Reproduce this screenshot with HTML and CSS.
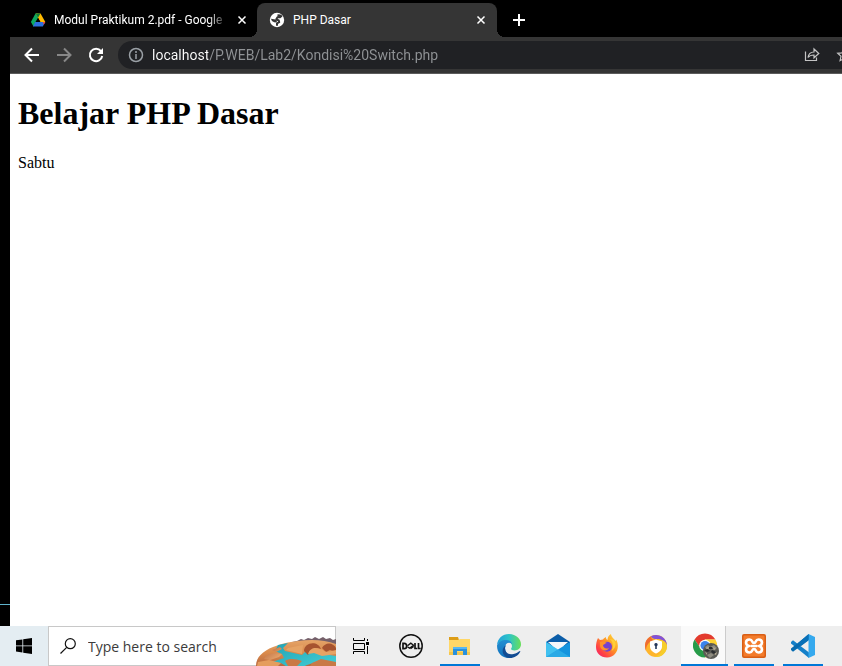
FILE: index.html
```html
<!DOCTYPE html>
<html lang="en">
<head>
<meta charset="utf-8">
<title>PHP Dasar</title>
<link rel="stylesheet" href="styles.css">
</head>
<body>
<div class="desktop">
  <div class="edge"></div>
  <div class="browser">
    <div class="tabs">
      <div class="tab">
        <svg class="favicon" viewBox="0 0 16 16"><path fill="#0da960" d="M5.500 1.500h2.700L9 5 3.500 14.500.9 10.100z"/><path fill="#ffba00" d="M5.700 1.500h4.800L15.300 10H10.200z"/><path fill="#0b7d38" d="M5.600 1.500h4.800L8 5.700z"/><path fill="#2d6fdd" d="M5.200 10h10.100l-2.500 4.500H2.900z"/><path fill="#f44336" d="M12.800 10h2.500l-1.500 2.700z"/><path fill="#000" d="M8 5.700l2.500 4.300h-5z"/></svg>
        <span class="title fade">Modul Praktikum 2.pdf - Google</span>
        <button class="close" aria-label="Close Modul Praktikum"><svg viewBox="0 0 10 10"><path d="M1.500 1.500l7 7m0-7l-7 7"/></svg></button>
      </div>
      <div class="tab active">
        <svg class="favicon" viewBox="0 0 16 16"><circle cx="8" cy="8" r="7.200" fill="#fff"/><path fill="none" stroke="#353535" stroke-width="2" stroke-linejoin="round" d="M12.800 3.800l-1.800 1.400H8.500L7.300 7.300 9.800 8.500l.4 1.700L8 11.300v2.400"/><path fill="#353535" d="M2 6.800l4.500.6L8 8.800l-.5 1.700-2.300-.3C4 10 2.500 9 2 6.800zM8.500 2.300l3 .2 1.800 1.800-1.500.8-3.300-.3z"/></svg>
        <span class="title">PHP Dasar</span>
        <button class="close" aria-label="Close PHP Dasar"><svg viewBox="0 0 10 10"><path d="M1.500 1.500l7 7m0-7l-7 7"/></svg></button>
      </div>
      <button class="newtab" aria-label="New tab"><svg viewBox="0 0 12 12"><path d="M6 0v12M0 6h12"/></svg></button>
    </div>
    <div class="toolbar">
      <button class="nav" aria-label="Back"><svg viewBox="0 0 16 16"><path d="M15 8H2M8 1.500L1.500 8 8 14.500"/></svg></button>
      <button class="nav dim" aria-label="Forward"><svg viewBox="0 0 16 16"><path d="M1 8h13M8 1.500L14.500 8 8 14.500"/></svg></button>
      <button class="nav" aria-label="Reload"><svg viewBox="0 0 16 16"><path d="M13 4.200A6.200 6.200 0 1 0 14.200 9"/><path class="solid" d="M15 1v6H9z"/></svg></button>
      <div class="omnibox">
        <svg class="info" viewBox="0 0 16 16"><circle cx="8" cy="8" r="6.500"/><path d="M8 7v5M8 4v2"/></svg>
        <input class="address" type="text" aria-label="Address" value="localhost/P.WEB/Lab2/Kondisi%20Switch.php">
        <button class="share" aria-label="Share"><svg viewBox="0 0 16 16"><path d="M1.500 4.500v9h11v-3M4 10.500C4.500 7 7 5 10 5V2l4.800 4.500L10 10.800V8C7.500 8 5.500 8.500 4 10.500z"/></svg></button>
        <button class="star" aria-label="Bookmark"><svg viewBox="0 0 16 16"><path d="M8 1.800l1.900 4 4.400.5L11 9.300l.9 4.400L8 11.500l-3.900 2.200.9-4.400-3.300-3 4.400-.5z"/></svg></button>
      </div>
    </div>
    <main class="page">
      <h1>Belajar PHP Dasar</h1>
      <p>Sabtu</p>
    </main>
  </div>
</div>
<div class="taskbar">
  <button class="start" aria-label="Start"><svg viewBox="0 0 16 16"><path d="M0 2.300l6.400-.9v6.100H0zM7.200 1.300L16 0v7.500H7.200zM0 8.300h6.400v6.200L0 13.600zM7.200 8.300H16V16l-8.800-1.300z"/></svg></button>
  <label class="search">
    <svg class="lens" viewBox="0 0 16 16"><circle cx="10.300" cy="5.700" r="5"/><path d="M6.700 9.300L.5 15.500"/></svg>
    <input type="text" placeholder="Type here to search" aria-label="Type here to search">
    <svg class="art" viewBox="0 0 80 30">
      <defs>
        <linearGradient id="sand" x1="0" y1="0" x2="0" y2="1"><stop offset="0" stop-color="#e5a468"/><stop offset=".5" stop-color="#d98a4c"/><stop offset="1" stop-color="#b9683f"/></linearGradient>
        <linearGradient id="pool" x1="0" y1="0" x2="1" y2="1"><stop offset="0" stop-color="#23a3b4"/><stop offset="1" stop-color="#42d0d8"/></linearGradient>
        <linearGradient id="dune" x1="0" y1="0" x2="1" y2="1"><stop offset="0" stop-color="#b5643b"/><stop offset="1" stop-color="#efb176"/></linearGradient>
      </defs>
      <path fill="#75606a" d="M36 6l5-1 4-2 3 1 4-2 4 1 3-2 4 2 4-2 3 2 4-1 3 2 3-1v7H36z"/>
      <path fill="url(#sand)" d="M0 30C0 21 7 15 17 11 25 8 32 6 42 5c14-2 27-1 38 3v22z"/>
      <path fill="url(#pool)" d="M22 9l10-2-5 5 2 3 17 4 4-4 8 1 9 2 13 2v10H66l-6-4-9 3-7 3H33l-8-5-9-1 12-4-2-4-7-3z"/>
      <path fill="url(#dune)" d="M8 23c2-5 10-7 18-5l-3 3-9 3zM16 14l8-3 2 2-6 3z"/>
      <path fill="#a6532f" d="M48 15c0-9 14-11 17-2-6-2-10 0-13 6zM66 12c3-6 11-6 14 0v4l-6-2-4 2z"/>
      <path fill="#e6a365" d="M32 12l15-3-1 9-16-4zM52 18c2-6 7-7 12-5 3 0 4 3 7 3l9-2v4l-14 2-8-3z"/>
      <path fill="#c97946" d="M29 25c4-3 11-2 17 0l-5 5h-9zM56 27l9-4 15 3v4H54z"/>
      <path fill="#e59d5e" d="M2 26l11-2 12 3-3 3H1z"/>
    </svg>
  </label>
  <div class="apps">
    <button class="app" aria-label="Task View"><svg class="i16" viewBox="0 0 16 16" fill="none" stroke="#000"><path d="M.5 0v2.500h11V0M.5 5.500h11v6H.5zM.5 16v-2.500h11V16M14.500 1v2M14.500 8v8"/><path fill="#000" stroke="none" d="M13 4h3v3h-3z"/></svg></button>
    <button class="app" aria-label="Dell"><svg class="i24" viewBox="0 0 24 24"><circle cx="12" cy="12" r="11.200" fill="none" stroke="#111" stroke-width="1.500"/><g fill="none" stroke="#111" stroke-width="1.700"><path d="M4 9.300v5.400h1.200c3.300 0 3.300-5.400 0-5.400zM16 9v5.500h2.200M19.500 9v5.500h2.200"/><path d="M8.500 11.800l3.300-2.600 2.700 2.100-4 3-2-1.500M11.500 14.700l3.200-2.300" stroke-width="1.300"/></g></svg></button>
    <button class="app open" aria-label="File Explorer"><svg class="i24" viewBox="0 0 24 24"><path fill="#dd9d17" d="M1 3h9l1 3v4H1z"/><path fill="#ffd767" d="M1 6h9l2-1h10v16H1z"/><path fill="#f6c64d" d="M1 18h21v3H1z"/><path fill="#2b91dc" d="M5 13h14v8h-4v-4H9v4H5z"/><path fill="#56b7f2" d="M5 13h14v2H5z"/></svg></button>
    <button class="app" aria-label="Edge"><svg class="i24" viewBox="0 0 24 24"><defs><linearGradient id="eg" x1="0" x2="1"><stop offset="0" stop-color="#229fdb"/><stop offset=".5" stop-color="#2dc4c8"/><stop offset="1" stop-color="#69df58"/></linearGradient><linearGradient id="eb" x1="0" y1="0" x2="0" y2="1"><stop offset="0" stop-color="#238fd2"/><stop offset="1" stop-color="#1070bc"/></linearGradient></defs><path fill="url(#eg)" d="M0 11C.5 4.500 5.500 0 12 0c7.200 0 12 5.200 12 10.200 0 3.900-3 6.200-6.300 6.200-2.800 0-4-1-3.500-1.900 2.300-4-.9-7-5-7C5 7.500 1.500 9 0 11z"/><path fill="url(#eb)" d="M0 11.500C1.500 8 5 6 9 6c3 0 5.500 1.500 6 4-3-2.600-7-.6-7 3.700 0 5 4 8.300 7 9.800C7 25.500 0 20.500 0 11.500z"/><path fill="#124b92" d="M9.200 11c-3.200 4 .3 11 7.300 9 2.600-.5 5-2.200 6-2.800.6-.3 1 .2.600.7-2 3.500-5.600 6-10.200 6-6.700 0-10.500-8.500-3.700-12.900z"/></svg></button>
    <button class="app" aria-label="Mail"><svg class="i24" viewBox="0 0 24 24"><path fill="#0b5da8" d="M0 8L12 0l12 8v4H0z"/><path fill="#f4f7fa" d="M2 8h20l-10 9z"/><path fill="#33b5ea" d="M0 8l12 8-12 7z"/><path fill="#1594de" d="M24 8L0 23h24z"/><path fill="#41c1f0" d="M0 8l12 7.500L0 23z"/><path fill="#2aaae6" d="M12 15.500L24 23H0z"/></svg></button>
    <button class="app" aria-label="Firefox"><svg class="i24" viewBox="0 0 24 24"><defs><linearGradient id="ff" x1="1" y1="0" x2="0" y2="1"><stop offset="0" stop-color="#ffe743"/><stop offset=".4" stop-color="#ff9b23"/><stop offset=".75" stop-color="#ff4045"/><stop offset="1" stop-color="#ee1879"/></linearGradient></defs><path fill="url(#ff)" d="M3 4l2 2 3-.5c1-1.500 2-2 3-2.500-.2 1.500.5 2.500 1.500 3C12.500 3 14 1 16 0c0 3 3 4.500 4.500 7l.8-1.500C25.500 14 21 23.500 12 23.500 5.500 23.500 1 19 1 13c0-3 .7-6.500 2-9z"/><circle cx="12" cy="12.800" r="5" fill="#7542cf"/><path fill="#ff942b" d="M5 8c3-1 5-.5 7 1-2 .2-2.500 1.500-4 2 .2 3 3 4.500 6 3-1.500 3.500-8 3.500-9-2z"/><path fill="#ffcf38" d="M15 5c3 3 4 8 1.500 12 4-2.500 5.500-7 2.500-11z"/></svg></button>
    <button class="app" aria-label="Secure Browser"><svg class="i24" viewBox="0 0 24 24"><circle cx="12" cy="12" r="11" fill="#ffb52b"/><path fill="#8252d8" d="M7 2.200A11 11 0 0 1 23 12c-1-5-5-7-10-7-3 0-5-.5-6-2.800z"/><path fill="#ef6c32" d="M7 2.200C1 5 0 11 2 17c0-5 2-9 8-11-2-.5-3-2-3-3.800z"/><path fill="#f6cd2b" d="M23 12c0 7-6 12-13 10.800 5-1 8-4 8-10 0-3-2-6-4-7 5 0 8 2 9 6.200z"/><path fill="#fff" d="M12 5.500l6 2v5c0 3.500-2.500 5.500-6 7-3.500-1.500-6-3.500-6-7v-5z"/><path fill="#24385b" d="M12 9a1.700 1.700 0 0 1 .8 3.200V15h-1.600v-2.800A1.700 1.700 0 0 1 12 9z"/></svg></button>
    <button class="app open current" aria-label="Chrome"><svg class="i26" viewBox="0 0 26 26"><path fill="#e33b2e" d="M1.600 6.500A12 12 0 0 1 22.400 6.500H12L7 15z"/><path fill="#fdd231" d="M22.400 6.500A12 12 0 0 1 12 24.500l5-9-5-9z"/><path fill="#279b49" d="M1.600 6.500A12 12 0 0 0 12 24.500l4-8-9-2z"/><circle cx="12" cy="12.500" r="5.800" fill="#fff"/><circle cx="12" cy="12.500" r="4.500" fill="#3c83ed"/><circle cx="18" cy="18" r="8" fill="#5b5b55"/><path fill="#8e8c80" d="M12 14l3-2 2 2 4-2 3 3-3 2-4-1-2 2zM14 22l4-2 3 2-4 3z"/><path fill="#b4aa91" d="M13 15l2-1 1 1-2 1zM20 14l3 2-2 1zM12 19l2 1v2zM21 21l3-2-1 3z"/><path fill="#292c2e" d="M11 17l4-1 2 2-3 1zM19 17l4 2-2 2-3-2zM16 14h3l1 2h-4z"/></svg></button>
    <button class="app open" aria-label="XAMPP"><svg class="i24" viewBox="0 0 24 24"><rect width="24" height="24" rx="2" fill="#d95e15"/><rect x="1.500" y="1.500" width="21" height="21" rx="1" fill="#f37b2b"/><path fill="none" stroke="#fff" stroke-width="2.600" stroke-linejoin="round" stroke-linecap="round" d="M9.500 12h5M7 12C3 11 3 5.500 7.500 5.500c3.500 0 2 3.500 4.500 3.500s1-3.500 4.500-3.500C21 5.500 21 11 17 12c4 1 4 6.500-.5 6.500-3.500 0-2-3.500-4.500-3.500s-1 3.500-4.500 3.500C3 18.500 3 13 7 12z"/></svg></button>
    <button class="app open" aria-label="Visual Studio Code"><svg class="i24" viewBox="0 0 24 24"><path fill="#1480c9" d="M0 8l2-1.700 16 12.200V24L0 9.500z"/><path fill="#066bb0" d="M0 16l2 1.700L18 5.500V0L0 14.500z"/><path fill="#35a9ee" d="M17.500 0L24 3v18l-6.500 3z"/><path fill="#0870b7" d="M17.500 0v6.500L10 12l-3-2.700z"/></svg></button>
  </div>
</div>
</body>
</html>
```
FILE: styles.css
```css
* { box-sizing: border-box; }

body {
  margin: 0;
  height: 100vh;
  display: flex;
  flex-direction: column;
  overflow: hidden;
  background: #000;
  font-family: "Open Sans", "Noto Sans", sans-serif;
}

button {
  padding: 0;
  border: 0;
  background: none;
  display: flex;
  align-items: center;
  justify-content: center;
  flex: none;
}

input {
  min-width: 0;
  padding: 0;
  border: 0;
  outline: 0;
  background: none;
  font-family: inherit;
}

svg { display: block; flex: none; }

.desktop { flex: 1; min-height: 0; display: flex; }

.edge {
  width: 10px;
  flex: none;
  background: linear-gradient(#5fb3cc, #5fb3cc) 0 calc(100% - 21px) / 100% 1px no-repeat;
}

.browser { flex: 1; min-width: 0; display: flex; flex-direction: column; }

.tabs { display: flex; padding: 3px 0 0 8px; }

.tab {
  position: relative;
  width: 240px;
  height: 34px;
  padding: 0 10px 0 12px;
  display: flex;
  align-items: center;
  color: #fff;
  font-family: Roboto, sans-serif;
  font-size: 12px;
}

.tab.active { background: #353535; border-radius: 8px 8px 0 0; margin-left: -1px; }

.tab.active::before,
.tab.active::after {
  content: "";
  position: absolute;
  bottom: 0;
  width: 8px;
  height: 8px;
}

.tab.active::before { right: 100%; background: radial-gradient(circle at 0 0, transparent 8px, #353535 8px); }
.tab.active::after { left: 100%; background: radial-gradient(circle at 100% 0, transparent 8px, #353535 8px); }

.favicon { width: 16px; height: 16px; margin-right: 8px; }

.title { flex: 1; min-width: 0; white-space: nowrap; overflow: hidden; margin-right: 8px; }
.fade { -webkit-mask-image: linear-gradient(90deg, #000 calc(100% - 20px), transparent); mask-image: linear-gradient(90deg, #000 calc(100% - 20px), transparent); }

.close { width: 12px; height: 16px; }
.close svg { width: 10px; height: 10px; }
.close path, .newtab path { fill: none; stroke: #fff; stroke-width: 2; }
.close path { stroke-width: 1.5px; }

.newtab { width: 28px; margin-left: 8px; }
.newtab svg { width: 12px; height: 12px; }

.toolbar {
  height: 37px;
  display: flex;
  align-items: center;
  padding-left: 6px;
  background: #353535;
  border-bottom: 1px solid #5b5b5b;
}

.nav { width: 32px; height: 28px; }
.nav svg { width: 16px; height: 16px; }
.nav path { fill: none; stroke: #fff; stroke-width: 2; }
.nav .solid { fill: #fff; stroke: none; }
.nav.dim path { stroke: #888; }

.omnibox {
  flex: 1;
  min-width: 0;
  height: 28px;
  margin-left: 6px;
  padding-left: 10px;
  display: flex;
  align-items: center;
  background: #202124;
  border-radius: 14px 0 0 14px;
}

.info { width: 16px; height: 16px; margin-right: 8px; fill: none; stroke: #9aa0a6; stroke-width: 1.5px; }

.address {
  flex: 1;
  height: 24px;
  font-family: Roboto, sans-serif;
  font-size: 14px;
  color: transparent;
  background: linear-gradient(90deg, #fff 56px, #909396 56px);
  -webkit-background-clip: text;
  background-clip: text;
}

.share { width: 16px; margin-right: 16px; }
.share svg, .star svg { width: 16px; height: 16px; fill: none; stroke: #c4c4c4; stroke-width: 1.2px; }
.star { width: 6px; justify-content: flex-start; overflow: hidden; }

.page {
  flex: 1;
  padding: 0 8px;
  background: #fff;
  color: #000;
  font-family: "Liberation Serif", serif;
  font-size: 16px;
}

.page h1 { margin: 21px 0; font-size: 32px; line-height: 37px; }
.page p { margin: 0; line-height: 20px; }

.taskbar { height: 40px; flex: none; display: flex; background: #eee; }

.start { width: 48px; background: #e4edf2; }
.start svg { width: 16px; height: 16px; }

.search {
  position: relative;
  width: 288px;
  flex: none;
  display: flex;
  align-items: center;
  padding-left: 11px;
  background: #fff;
  border: 1px solid #c8c8c8;
}

.search input { width: 160px; margin-left: 12px; font-size: 14px; }
.search input::placeholder { color: #3b3b3b; opacity: 1; }
.lens { width: 16px; height: 16px; fill: none; stroke: #111; stroke-width: 1.2px; }
.art { position: absolute; right: -1px; bottom: -1px; width: 80px; height: 30px; }

.apps { display: flex; }
.app { position: relative; width: 49px; }
.app.open::after {
  content: "";
  position: absolute;
  left: 6px;
  right: 3px;
  bottom: 0;
  height: 2px;
  background: #0078d7;
}
.app:not(:first-child) { padding-left: 2px; }
.app.current { padding-left: 4px; background: linear-gradient(90deg, transparent 2px, #fafafa 2px, #fafafa 46px, #ccc 46px, #ccc 47px, transparent 47px); }
.app.current::after { left: 2px; right: 0; }
.i16 { width: 16px; height: 16px; }
.i24 { width: 24px; height: 24px; }
.i26 { width: 26px; height: 26px; }
```
